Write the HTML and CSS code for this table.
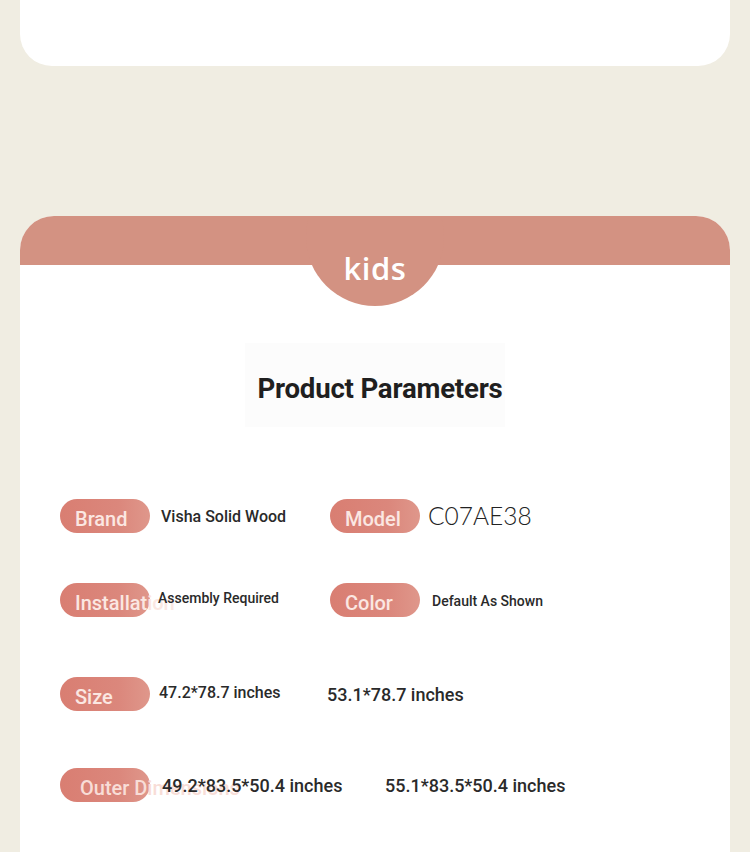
FILE: index.html
```html
<!DOCTYPE html>
<html>
<head>
<meta charset="utf-8">
<link rel="stylesheet" href="styles.css">
</head>
<body>
<div class="top-card"></div>
<section class="card">
  <div class="card-head">
    <div class="badge"><span>kids</span></div>
  </div>
  <div class="title-wrap">
    <h1 class="title">Product Parameters</h1>
  </div>
  <div class="params">
    <div class="row row1">
      <div class="cell c1a"><span class="pill"><span class="lbl">Brand</span></span><span class="val v16 ml11">Visha Solid Wood</span></div>
      <div class="cell"><span class="pill"><span class="lbl">Model</span></span><span class="val model">C07AE38</span></div>
    </div>
    <div class="row row2">
      <div class="cell c1a"><span class="pill"><span class="lbl">Installation</span></span><span class="val v14 ml8">Assembly Required</span></div>
      <div class="cell"><span class="pill"><span class="lbl">Color</span></span><span class="val v14 ml12 low">Default As Shown</span></div>
    </div>
    <div class="row row3">
      <div class="cell c1b"><span class="pill"><span class="lbl">Size</span></span><span class="val v16 ml9">47.2*78.7 inches</span></div>
      <div class="cell"><span class="val v18">53.1*78.7 inches</span></div>
    </div>
    <div class="row row4">
      <div class="cell c1c"><span class="pill"><span class="lbl lbl-o">Outer Dimensions</span></span><span class="val v19 ml12">49.2*83.5*50.4 inches</span></div>
      <div class="cell"><span class="val v19">55.1*83.5*50.4 inches</span></div>
    </div>
  </div>
</section>
</body>
</html>
```
FILE: styles.css
```css
html, body {
  margin: 0;
  padding: 0;
}
body {
  background: #f0ede2;
  width: 750px;
  height: 852px;
  overflow: hidden;
  font-family: Roboto, "Liberation Sans", sans-serif;
}
.top-card {
  margin: 0 20px;
  height: 66px;
  background: #fff;
  border-radius: 0 0 32px 32px;
}
.card {
  margin: 150px 20px 0;
  background: #fff;
  border-radius: 34px 34px 0 0;
  height: 636px;
  overflow: hidden;
  position: relative;
}
.card-head {
  height: 49px;
  background: #d39282;
  position: relative;
}
.badge {
  position: absolute;
  left: 286px;
  top: -48px;
  width: 138px;
  height: 138px;
  border-radius: 50%;
  background: #d39282;
  display: flex;
  justify-content: center;
  align-items: flex-start;
}
.badge span {
  margin-top: 80px;
  color: #fff;
  font-family: "Open Sans", sans-serif;
  font-weight: 600;
  font-size: 31px;
  line-height: 40px;
  letter-spacing: 0.5px;
}
.title-wrap {
  margin: 78px auto 0;
  width: 260px;
  height: 84px;
  background: #fcfcfc;
  display: flex;
  align-items: center;
  justify-content: center;
}
.title {
  margin: 6px 0 0 10px;
  font-size: 27.6px;
  font-weight: 700;
  color: #1f1f1f;
  letter-spacing: -0.2px;
  white-space: nowrap;
}
.params {
  padding-left: 40px;
}
.row {
  display: flex;
  align-items: center;
  height: 34px;
}
.row1 { margin-top: 72px; }
.row2 { margin-top: 50px; }
.row3 { margin-top: 60px; }
.row4 { margin-top: 57px; }
.cell {
  display: flex;
  align-items: center;
  white-space: nowrap;
}
.c1a { width: 270px; }
.c1b { width: 267px; }
.c1c { width: 325px; }
.pill {
  flex: 0 0 90px;
  width: 90px;
  height: 34px;
  border-radius: 17px;
  background: linear-gradient(90deg, #d97e72 0%, #db877c 65%, #df978b 100%);
  display: flex;
  align-items: center;
  overflow: visible;
}
.lbl {
  margin-left: 15px;
  margin-top: 5px;
  color: #fbe7e2;
  font-size: 20px;
  font-weight: 500;
  line-height: 24px;
}
.lbl-o {
  margin-left: 20px;
  margin-top: 6px;
  color: #f8ddd7;
}
.val {
  color: #2a2a2a;
  font-weight: 500;
}
.v14 { font-size: 14px; }
.v16 { font-size: 16px; }
.v18 { font-size: 18px; }
.v19 { font-size: 18px; }
.ml8 { margin-left: 8px; margin-top: -4px; }
.ml9 { margin-left: 9px; margin-top: -3px; }
.ml11 { margin-left: 11px; }
.ml12 { margin-left: 12px; }
.low { margin-top: 2px; }
.model {
  margin-left: 8px;
  font-family: Lato, sans-serif;
  font-weight: 300;
  font-size: 24.5px;
  color: #222;
  margin-top: -2px;
}
.row3 .v18 { margin-top: 1px; }
```
